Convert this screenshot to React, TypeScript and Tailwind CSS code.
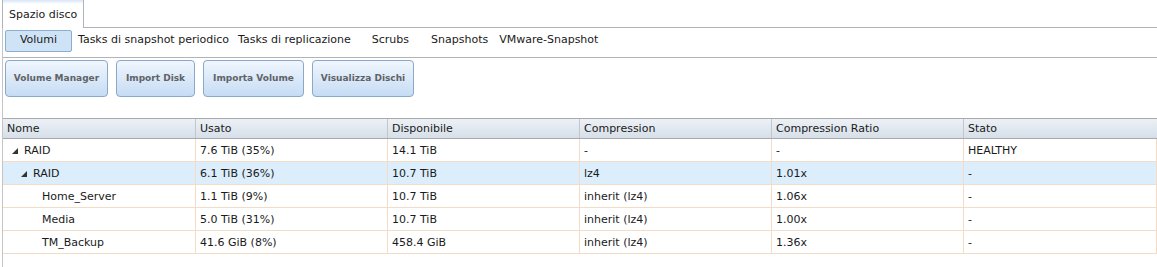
import React from "react";

const subTabs = [
  { label: "Tasks di snapshot periodico", gap: "ml-[6px]" },
  { label: "Tasks di replicazione", gap: "ml-[9px]" },
  { label: "Scrubs", gap: "ml-[21px]" },
  { label: "Snapshots", gap: "ml-[22px]" },
  { label: "VMware-Snapshot", gap: "ml-[11px]" },
];
const actions = [
  { label: "Volume Manager", w: "w-[103px]" },
  { label: "Import Disk", w: "w-[79px]" },
  { label: "Importa Volume", w: "w-[101px]" },
  { label: "Visualizza Dischi", w: "w-[102px]" },
];
const columns = ["Nome", "Usato", "Disponibile", "Compression", "Compression Ratio", "Stato"];

type Row = { level: number; expand: boolean; selected?: boolean; cells: string[] };

const rows: Row[] = [
  { level: 0, expand: true, cells: ["RAID", "7.6 TiB (35%)", "14.1 TiB", "-", "-", "HEALTHY"] },
  { level: 1, expand: true, selected: true, cells: ["RAID", "6.1 TiB (36%)", "10.7 TiB", "lz4", "1.01x", "-"] },
  { level: 2, expand: false, cells: ["Home_Server", "1.1 TiB (9%)", "10.7 TiB", "inherit (lz4)", "1.06x", "-"] },
  { level: 2, expand: false, cells: ["Media", "5.0 TiB (31%)", "10.7 TiB", "inherit (lz4)", "1.00x", "-"] },
  { level: 2, expand: false, cells: ["TM_Backup", "41.6 GiB (8%)", "458.4 GiB", "inherit (lz4)", "1.36x", "-"] },
];

function Expander() {
  return (
    <svg width="6" height="6" viewBox="0 0 6 6" className="mr-[6px] shrink-0">
      <polygon points="6,0 6,6 0,6" fill="#333" />
    </svg>
  );
}

export default function App() {
  return (
    <div className="w-[1157px] h-[267px] overflow-hidden bg-white text-[11px] text-[#1a1a1a] font-['DejaVu_Sans',Verdana,sans-serif]">
      {/* tab strip */}
      <div className="flex h-[28px] items-stretch">
        <div className="ml-[2px] w-[82px] whitespace-nowrap border-l border-r border-[#b0b4b8] bg-gradient-to-b from-[#d6e5f6] via-white to-white via-[14%] flex items-center pl-[6px] pt-[3px]">
          Spazio disco
        </div>
        <div className="flex-1 border-b border-[#b0b4b8]" />
      </div>

      <div className="ml-[2px] border-l border-[#c4c4c4] h-full">
        {/* sub tabs */}
        <div className="flex h-[30px] items-center border-b border-[#b0b4b8] pl-[2px] pb-[4px]">
          <div className="w-[67px] h-[22px] flex items-center justify-center rounded-[2px] border border-[#8eaecd] bg-[#cfe3f7]">
            Volumi
          </div>
          {subTabs.map((t) => (
            <span key={t.label} className={`${t.gap} whitespace-nowrap`}>
              {t.label}
            </span>
          ))}
        </div>

        {/* action buttons */}
        <div className="flex gap-[8px] pl-[2px] pt-[2px] h-[60px]">
          {actions.map((a) => (
            <div
              key={a.label}
              className={`${a.w} h-[37px] flex items-center justify-center whitespace-nowrap rounded-[4px] border border-[#8aa8c8] bg-gradient-to-b from-[#f0f6fd] to-[#c6dcf4] text-[9px] font-bold text-[#5f6366]`}
            >
              {a.label}
            </div>
          ))}
        </div>

        {/* grid */}
        <div className="w-[1154px]">
          <div className="grid grid-cols-[193px_192px_192px_192px_192px_193px] h-[21px] border-t border-b border-[#a9a9a9] bg-gradient-to-b from-[#edf1f6] to-[#d6dfe9]">
            {columns.map((c, i) => (
              <div key={c} className={`flex items-center pl-[4px] pt-[1px] ${i < 5 ? "border-r border-[#c3c7cc]" : ""}`}>
                {c}
              </div>
            ))}
          </div>
          {rows.map((r, ri) => (
            <div
              key={ri}
              className={`grid grid-cols-[193px_192px_192px_192px_192px_193px] h-[23px] border-b border-[#f3dcc5] ${r.selected ? "bg-[#dcedfc]" : "bg-white"}`}
            >
              {r.cells.map((c, i) => (
                <div key={i} className="flex items-center pl-[4px] pt-[2px] border-r border-[#f3dcc5]">
                  {i === 0 ? (
                    <div className="flex items-center" style={{ paddingLeft: r.level * 9 + 5 }}>
                      {r.expand ? <Expander /> : <span className="w-[12px]" />}
                      <span>{c}</span>
                    </div>
                  ) : (
                    c
                  )}
                </div>
              ))}
            </div>
          ))}
        </div>
      </div>
    </div>
  );
}
